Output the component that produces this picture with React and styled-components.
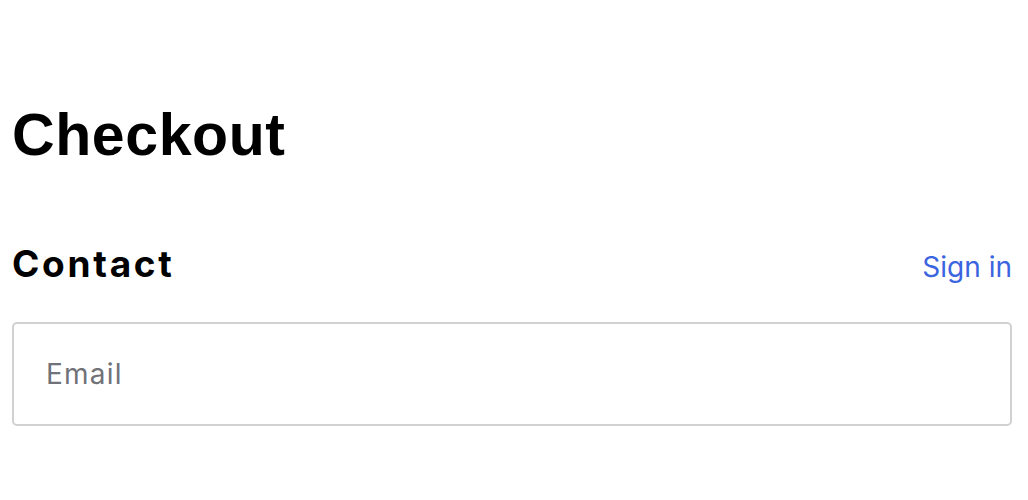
import React from 'react';
import styled, { createGlobalStyle } from 'styled-components';

const GlobalStyle = createGlobalStyle`
  html, body {
    margin: 0;
    padding: 0;
    background: #fff;
  }
  * {
    box-sizing: border-box;
  }
`;

const Page = styled.div`
  width: 1028px;
  padding: 103px 16px 0 12px;
  font-family: "Liberation Sans", Arial, sans-serif;
  color: #000;
`;

const Title = styled.h1`
  margin: 0;
  font-size: 59px;
  line-height: 64px;
  font-weight: 700;
  letter-spacing: 0.6px;
`;

const SectionHeader = styled.div`
  display: flex;
  justify-content: space-between;
  align-items: baseline;
  margin-top: 75px;
`;

const SectionTitle = styled.h2`
  margin: 0;
  font-family: Inter, "Noto Sans", sans-serif;
  font-size: 37px;
  line-height: 44px;
  font-weight: 700;
  letter-spacing: 2.7px;
`;

const TextLink = styled.a`
  font-family: Inter, "Noto Sans", sans-serif;
  font-size: 28px;
  color: #3b65e0;
  text-decoration: none;
  cursor: pointer;
`;

const Input = styled.input`
  display: block;
  width: 100%;
  height: 104px;
  margin-top: 36px;
  padding: 0 32px;
  border: 2px solid #d3d0d0;
  border-radius: 5px;
  font-family: Inter, "Noto Sans", sans-serif;
  font-size: 28px;
  letter-spacing: 1.2px;
  color: #000;
  outline: none;
  &::placeholder {
    color: #707278;
  }
`;

export default function App() {
  return (
    <>
      <GlobalStyle />
      <Page>
        <Title>Checkout</Title>
        <SectionHeader>
          <SectionTitle>Contact</SectionTitle>
          <TextLink>Sign in</TextLink>
        </SectionHeader>
        <Input type="email" placeholder="Email" />
      </Page>
    </>
  );
}
